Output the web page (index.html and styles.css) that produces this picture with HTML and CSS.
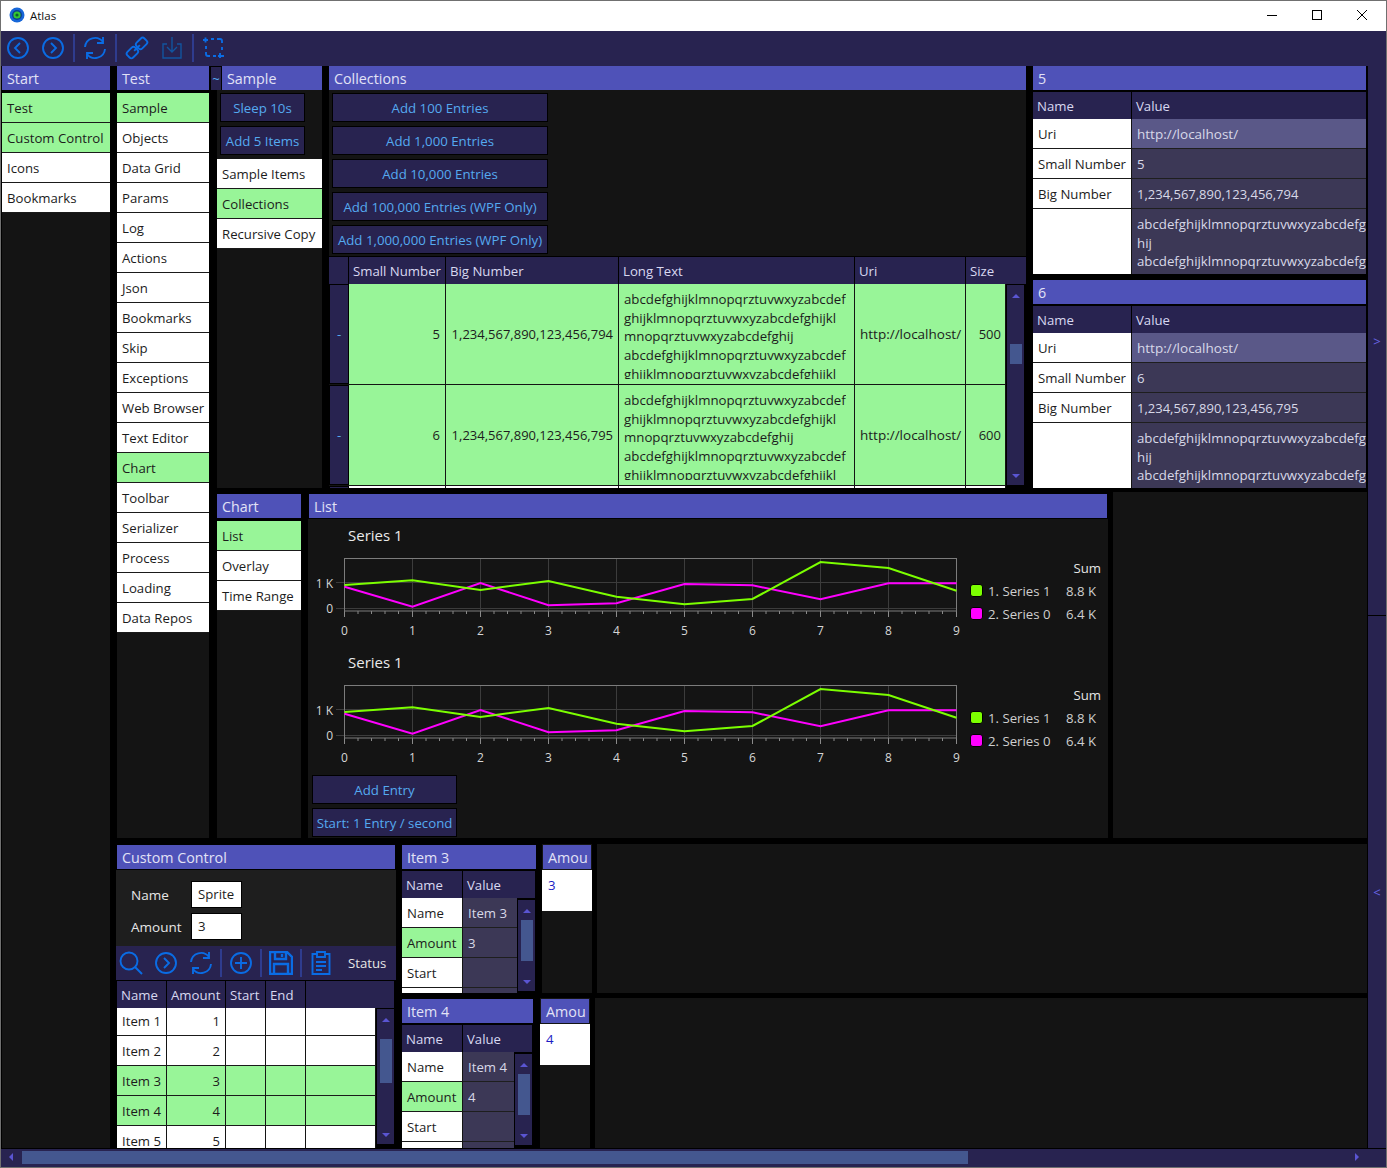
FILE: index.html
```html
<!DOCTYPE html>
<html>
<head>
  <title>Atlas</title>
  <meta charset="UTF-8">
  <link rel="stylesheet" href="styles.css">
</head>
<body>
<div class="window">
  <div class="titlebar">
    <svg class="app-icon" width="16" height="16" viewBox="0 0 16 16"><circle cx="8" cy="8" r="7.5" fill="#1767d8"/><circle cx="8" cy="8" r="5" fill="#0d3f8f"/><circle cx="8" cy="8" r="3.6" fill="#35c832"/><circle cx="8" cy="8" r="1.6" fill="#0d5f30"/></svg>
    <span class="app-name">Atlas</span>
    <div class="win-controls">
      <svg width="12" height="12" viewBox="0 0 12 12"><path d="M1 6.5h10" stroke="#000" fill="none"/></svg>
      <svg width="12" height="12" viewBox="0 0 12 12"><rect x="1.5" y="1.5" width="9" height="9" stroke="#000" fill="none"/></svg>
      <svg width="12" height="12" viewBox="0 0 12 12"><path d="M1 1l10 10M11 1L1 11" stroke="#000" fill="none"/></svg>
    </div>
  </div>

  <div class="toolbar">
    <svg class="ico" viewBox="0 0 24 24"><circle cx="12" cy="12" r="10"/><path d="M14 7l-5 5 5 5"/></svg>
    <svg class="ico" viewBox="0 0 24 24"><circle cx="12" cy="12" r="10"/><path d="M10 7l5 5-5 5"/></svg>
    <span class="sep"></span>
    <svg class="ico" viewBox="0 0 24 24"><path d="M2 11A10 10 0 0 1 20 6M22 13A10 10 0 0 1 4 18"/><path d="M20 1v6h-6M4 23v-6h6"/></svg>
    <span class="sep"></span>
    <svg class="ico" viewBox="0 0 24 24"><g transform="rotate(-45 12 12)"><rect x="0" y="8" width="11" height="8" rx="2.500"/><rect x="13" y="8" width="11" height="8" rx="2.500"/><path d="M8 12h8"/></g></svg>
    <svg class="ico dim" viewBox="0 0 24 24"><path d="M7 8H3v14h18V8h-4M12 1v14M7 11l5 5 5-5"/></svg>
    <span class="sep"></span>
    <svg class="ico" viewBox="0 0 24 24"><path d="M1 4h5M3.500 1.500v5M9 3h3M15 3h3a2 2 0 0 1 2 2v2M20 11v3M4 10v3M4 16v2a2 2 0 0 0 2 2h2M11 20h3M18 22v-5M16 20h6"/></svg>
  </div>

  <div class="main">
    <div class="col-start">
      <div class="head">Start</div>
      <div class="pane">
        <div class="item on">Test</div>
        <div class="item on">Custom Control</div>
        <div class="item">Icons</div>
        <div class="item">Bookmarks</div>
      </div>
    </div>

    <div class="content">
      <div class="upper">
        <div class="col-test">
          <div class="head">Test</div>
          <div class="pane">
            <div class="item on">Sample</div>
            <div class="item">Objects</div>
            <div class="item">Data Grid</div>
            <div class="item">Params</div>
            <div class="item">Log</div>
            <div class="item">Actions</div>
            <div class="item">Json</div>
            <div class="item">Bookmarks</div>
            <div class="item">Skip</div>
            <div class="item">Exceptions</div>
            <div class="item">Web Browser</div>
            <div class="item">Text Editor</div>
            <div class="item on">Chart</div>
            <div class="item">Toolbar</div>
            <div class="item">Serializer</div>
            <div class="item">Process</div>
            <div class="item">Loading</div>
            <div class="item">Data Repos</div>
          </div>
        </div>

        <div class="upper-right">
          <div class="top">
            <div class="col-sample">
              <div class="sample-head">
                <span class="tilde">~</span>
                <div class="head">Sample</div>
              </div>
              <div class="sample-body">
                <div class="sample-buttons">
                  <button class="btn btn-sm">Sleep 10s</button>
                  <button class="btn btn-sm">Add 5 Items</button>
                </div>
                <div class="item">Sample Items</div>
                <div class="item on">Collections</div>
                <div class="item">Recursive Copy</div>
              </div>
            </div>

            <div class="col-coll">
              <div class="head">Collections</div>
              <div class="coll-buttons">
                <button class="btn btn-lg">Add 100 Entries</button>
                <button class="btn btn-lg">Add 1,000 Entries</button>
                <button class="btn btn-lg">Add 10,000 Entries</button>
                <button class="btn btn-lg">Add 100,000 Entries (WPF Only)</button>
                <button class="btn btn-lg">Add 1,000,000 Entries (WPF Only)</button>
              </div>
              <div class="coll-head">
                <span></span><span>Small Number</span><span>Big Number</span><span>Long Text</span><span>Uri</span><span>Size</span>
              </div>
              <div class="coll-wrap">
                <div class="coll-rows">
                  <div class="coll-row">
                    <div class="rowhead">-</div>
                    <div class="cell num">5</div>
                    <div class="cell num">1,234,567,890,123,456,794</div>
                    <div class="cell long"><div class="clip">abcdefghijklmnopqrztuvwxyzabcdef<br>ghijklmnopqrztuvwxyzabcdefghijkl<br>mnopqrztuvwxyzabcdefghij<br>abcdefghijklmnopqrztuvwxyzabcdef<br>ghijklmnopqrztuvwxyzabcdefghijkl</div></div>
                    <div class="cell uri">http://localhost/</div>
                    <div class="cell num size">500</div>
                  </div>
                  <div class="coll-row">
                    <div class="rowhead">-</div>
                    <div class="cell num">6</div>
                    <div class="cell num">1,234,567,890,123,456,795</div>
                    <div class="cell long"><div class="clip">abcdefghijklmnopqrztuvwxyzabcdef<br>ghijklmnopqrztuvwxyzabcdefghijkl<br>mnopqrztuvwxyzabcdefghij<br>abcdefghijklmnopqrztuvwxyzabcdef<br>ghijklmnopqrztuvwxyzabcdefghijkl</div></div>
                    <div class="cell uri">http://localhost/</div>
                    <div class="cell num size">600</div>
                  </div>
                  <div class="coll-row coll-row-next"><div class="rowhead"></div><div class="cell"></div><div class="cell"></div><div class="cell"></div><div class="cell"></div><div class="cell"></div></div>
                </div>
                <div class="vscroll vs-coll">
                  <span class="arr-up"></span><span class="thumb"></span><span class="arr-down"></span>
                </div>
              </div>
            </div>

            <div class="col-detail">
              <div class="detail">
                <div class="head">5</div>
                <div class="detail-head"><span>Name</span><span>Value</span></div>
                <div class="detail-row"><div class="dn">Uri</div><div class="dv sel uri">http://localhost/</div></div>
                <div class="detail-row"><div class="dn">Small Number</div><div class="dv">5</div></div>
                <div class="detail-row"><div class="dn">Big Number</div><div class="dv big">1,234,567,890,123,456,794</div></div>
                <div class="detail-row tall"><div class="dn"></div><div class="dv">abcdefghijklmnopqrztuvwxyzabcdefg<br>hij<br>abcdefghijklmnopqrztuvwxyzabcdefg</div></div>
              </div>
              <div class="detail">
                <div class="head">6</div>
                <div class="detail-head"><span>Name</span><span>Value</span></div>
                <div class="detail-row"><div class="dn">Uri</div><div class="dv sel uri">http://localhost/</div></div>
                <div class="detail-row"><div class="dn">Small Number</div><div class="dv">6</div></div>
                <div class="detail-row"><div class="dn">Big Number</div><div class="dv big">1,234,567,890,123,456,795</div></div>
                <div class="detail-row tall"><div class="dn"></div><div class="dv">abcdefghijklmnopqrztuvwxyzabcdefg<br>hij<br>abcdefghijklmnopqrztuvwxyzabcdefg</div></div>
              </div>
            </div>
          </div>

          <div class="bottom">
            <div class="col-chart">
              <div class="head">Chart</div>
              <div class="pane">
                <div class="item on">List</div>
                <div class="item">Overlay</div>
                <div class="item">Time Range</div>
              </div>
            </div>
            <div class="col-list">
              <div class="head">List</div>
              <div class="list-body">
                <div class="chart">
                  <div class="chart-title">Series 1</div>
                  <div class="chart-row">
                    <svg class="plot" width="656" height="90" viewBox="312 550 656 90">
                      <g class="ticks"><path d="M344.500 611v6M412.500 611v6M480.500 611v6M548.500 611v6M616.500 611v6M684.500 611v6M752.500 611v6M820.500 611v6M888.500 611v6M956.500 611v6"/><path d="M358 611v3M371.500 611v3M385 611v3M398.500 611v3M426 611v3M439.500 611v3M453 611v3M466.500 611v3M494 611v3M507.500 611v3M521 611v3M534.500 611v3M562 611v3M575.500 611v3M589 611v3M602.500 611v3M630 611v3M643.500 611v3M657 611v3M670.500 611v3M698 611v3M711.500 611v3M725 611v3M738.500 611v3M766 611v3M779.500 611v3M793 611v3M806.500 611v3M834 611v3M847.500 611v3M861 611v3M874.500 611v3M902 611v3M915.500 611v3M929 611v3M942.500 611v3"/></g>
                      <path class="grid" d="M412.500 558v53M480.500 558v53M548.500 558v53M616.500 558v53M684.500 558v53M752.500 558v53M820.500 558v53M888.500 558v53M336 582.500h620M336 608.500h620"/>
                      <rect class="frame" x="344.500" y="558.500" width="612" height="52.500"/>
                      <polyline class="s-mag" points="344.500,586.700 412.500,606.700 480.500,583 548.500,605.300 616.500,603.300 684.500,584 752.500,585.300 820.500,599.300 888.500,583.300 956.500,583.300"/>
                      <polyline class="s-green" points="344.500,585 412.500,580.300 480.500,590 548.500,581 616.500,596.700 684.500,604.300 752.500,599 820.500,562 888.500,568 956.500,590.700"/>
                      <g class="axis"><text x="333" y="588" text-anchor="end">1 K</text><text x="333" y="613" text-anchor="end">0</text><text x="344.500" y="635" text-anchor="middle">0</text><text x="412.500" y="635" text-anchor="middle">1</text><text x="480.500" y="635" text-anchor="middle">2</text><text x="548.500" y="635" text-anchor="middle">3</text><text x="616.500" y="635" text-anchor="middle">4</text><text x="684.500" y="635" text-anchor="middle">5</text><text x="752.500" y="635" text-anchor="middle">6</text><text x="820.500" y="635" text-anchor="middle">7</text><text x="888.500" y="635" text-anchor="middle">8</text><text x="956.500" y="635" text-anchor="middle">9</text></g>
                    </svg>
                    <div class="legend">
                      <span class="sum">Sum</span>
                      <span class="swatch green"></span><span>1. Series 1</span><span class="lv">8.8 K</span>
                      <span class="swatch mag"></span><span>2. Series 0</span><span class="lv">6.4 K</span>
                    </div>
                  </div>
                </div>
                <div class="chart">
                  <div class="chart-title">Series 1</div>
                  <div class="chart-row">
                    <svg class="plot" width="656" height="90" viewBox="312 550 656 90">
                      <g class="ticks"><path d="M344.500 611v6M412.500 611v6M480.500 611v6M548.500 611v6M616.500 611v6M684.500 611v6M752.500 611v6M820.500 611v6M888.500 611v6M956.500 611v6"/><path d="M358 611v3M371.500 611v3M385 611v3M398.500 611v3M426 611v3M439.500 611v3M453 611v3M466.500 611v3M494 611v3M507.500 611v3M521 611v3M534.500 611v3M562 611v3M575.500 611v3M589 611v3M602.500 611v3M630 611v3M643.500 611v3M657 611v3M670.500 611v3M698 611v3M711.500 611v3M725 611v3M738.500 611v3M766 611v3M779.500 611v3M793 611v3M806.500 611v3M834 611v3M847.500 611v3M861 611v3M874.500 611v3M902 611v3M915.500 611v3M929 611v3M942.500 611v3"/></g>
                      <path class="grid" d="M412.500 558v53M480.500 558v53M548.500 558v53M616.500 558v53M684.500 558v53M752.500 558v53M820.500 558v53M888.500 558v53M336 582.500h620M336 608.500h620"/>
                      <rect class="frame" x="344.500" y="558.500" width="612" height="52.500"/>
                      <polyline class="s-mag" points="344.500,586.700 412.500,606.700 480.500,583 548.500,605.300 616.500,603.300 684.500,584 752.500,585.300 820.500,599.300 888.500,583.300 956.500,583.300"/>
                      <polyline class="s-green" points="344.500,585 412.500,580.300 480.500,590 548.500,581 616.500,596.700 684.500,604.300 752.500,599 820.500,562 888.500,568 956.500,590.700"/>
                      <g class="axis"><text x="333" y="588" text-anchor="end">1 K</text><text x="333" y="613" text-anchor="end">0</text><text x="344.500" y="635" text-anchor="middle">0</text><text x="412.500" y="635" text-anchor="middle">1</text><text x="480.500" y="635" text-anchor="middle">2</text><text x="548.500" y="635" text-anchor="middle">3</text><text x="616.500" y="635" text-anchor="middle">4</text><text x="684.500" y="635" text-anchor="middle">5</text><text x="752.500" y="635" text-anchor="middle">6</text><text x="820.500" y="635" text-anchor="middle">7</text><text x="888.500" y="635" text-anchor="middle">8</text><text x="956.500" y="635" text-anchor="middle">9</text></g>
                    </svg>
                    <div class="legend">
                      <span class="sum">Sum</span>
                      <span class="swatch green"></span><span>1. Series 1</span><span class="lv">8.8 K</span>
                      <span class="swatch mag"></span><span>2. Series 0</span><span class="lv">6.4 K</span>
                    </div>
                  </div>
                </div>
                <div class="list-buttons">
                  <button class="btn btn-wide">Add Entry</button>
                  <button class="btn btn-wide">Start: 1 Entry / second</button>
                </div>
              </div>
            </div>
            <div class="empty empty-list"></div>
          </div>
        </div>
      </div>

      <div class="lower">
        <div class="col-custom">
          <div class="head">Custom Control</div>
          <div class="form">
            <div class="form-row"><label>Name</label><div class="input">Sprite</div></div>
            <div class="form-row"><label>Amount</label><div class="input">3</div></div>
          </div>
          <div class="subtool">
            <svg class="ico" viewBox="0 0 24 24"><circle cx="10" cy="10" r="8.500"/><path d="M16 16l7 7"/></svg>
            <svg class="ico" viewBox="0 0 24 24"><circle cx="12" cy="12" r="10"/><path d="M10 7l5 5-5 5"/></svg>
            <svg class="ico" viewBox="0 0 24 24"><path d="M2 11A10 10 0 0 1 20 6M22 13A10 10 0 0 1 4 18"/><path d="M20 1v6h-6M4 23v-6h6"/></svg>
            <span class="sep"></span>
            <svg class="ico" viewBox="0 0 24 24"><circle cx="12" cy="12" r="10"/><path d="M12 6v12M6 12h12"/></svg>
            <span class="sep"></span>
            <svg class="ico strong" viewBox="0 0 24 24"><path d="M1 1h17l5 5v17H1zM6 1v7h11V1M13 3v3M5 23v-10h14v10"/></svg>
            <span class="sep"></span>
            <svg class="ico" viewBox="0 0 24 24"><path d="M8 3H3.500v20h17V3H16M8 1h8v5H8zM7 11h10M7 15h10M7 19h6"/></svg>
            <span class="status">Status</span>
          </div>
          <div class="items-head"><span>Name</span><span>Amount</span><span>Start</span><span>End</span><span></span></div>
          <div class="items-wrap">
            <div class="items-rows">
              <div class="items-row"><div class="cell">Item 1</div><div class="cell num">1</div><div class="cell"></div><div class="cell"></div><div class="cell"></div></div>
              <div class="items-row"><div class="cell">Item 2</div><div class="cell num">2</div><div class="cell"></div><div class="cell"></div><div class="cell"></div></div>
              <div class="items-row on"><div class="cell">Item 3</div><div class="cell num">3</div><div class="cell"></div><div class="cell"></div><div class="cell"></div></div>
              <div class="items-row on"><div class="cell">Item 4</div><div class="cell num">4</div><div class="cell"></div><div class="cell"></div><div class="cell"></div></div>
              <div class="items-row"><div class="cell">Item 5</div><div class="cell num">5</div><div class="cell"></div><div class="cell"></div><div class="cell"></div></div>
            </div>
            <div class="vscroll vs-items">
              <span class="arr-up"></span><span class="thumb"></span><span class="arr-down"></span>
            </div>
          </div>
        </div>

        <div class="col-instances">
          <div class="instance inst-3">
            <div class="inst-main">
              <div class="head">Item 3</div>
              <div class="inst-head"><span>Name</span><span>Value</span></div>
              <div class="inst-wrap">
                <div class="inst-rows">
                  <div class="inst-row"><div class="dn">Name</div><div class="dv">Item 3</div></div>
                  <div class="inst-row"><div class="dn on">Amount</div><div class="dv">3</div></div>
                  <div class="inst-row"><div class="dn">Start</div><div class="dv"></div></div>
                  <div class="inst-row"><div class="dn"></div><div class="dv"></div></div>
                </div>
                <div class="vscroll vs-inst"><span class="arr-up"></span><span class="thumb"></span><span class="arr-down"></span></div>
              </div>
            </div>
            <div class="amount">
              <div class="head">Amou</div>
              <div class="amount-val">3</div>
            </div>
            <div class="empty"></div>
          </div>
          <div class="instance inst-4">
            <div class="inst-main">
              <div class="head">Item 4</div>
              <div class="inst-head"><span>Name</span><span>Value</span></div>
              <div class="inst-wrap">
                <div class="inst-rows">
                  <div class="inst-row"><div class="dn">Name</div><div class="dv">Item 4</div></div>
                  <div class="inst-row"><div class="dn on">Amount</div><div class="dv">4</div></div>
                  <div class="inst-row"><div class="dn">Start</div><div class="dv"></div></div>
                  <div class="inst-row"><div class="dn"></div><div class="dv"></div></div>
                </div>
                <div class="vscroll vs-inst"><span class="arr-up"></span><span class="thumb"></span><span class="arr-down"></span></div>
              </div>
            </div>
            <div class="amount">
              <div class="head">Amou</div>
              <div class="amount-val">4</div>
            </div>
            <div class="empty"></div>
          </div>
        </div>
      </div>
    </div>

    <div class="side">
      <div class="side-part side-upper">&gt;</div>
      <div class="side-part side-lower">&lt;</div>
    </div>
  </div>

  <div class="hscroll">
    <span class="arr-left"></span>
    <span class="hthumb"></span>
    <span class="arr-right"></span>
  </div>
</div>
</body>
</html>
```

FILE: styles.css
```css
* {
  box-sizing: border-box;
}
body {
  margin: 0;
  font-family: "Open Sans", "Noto Sans", sans-serif;
  font-size: 13.2px;
  color: #1c1c1c;
  background: #000;
}
button {
  font-family: inherit;
}
.window {
  width: 1387px;
  height: 1168px;
  border: 1px solid #707070;
  display: flex;
  flex-direction: column;
  background: #000;
  overflow: hidden;
}

/* title bar */
.titlebar {
  height: 30px;
  flex: none;
  background: #fff;
  display: flex;
  align-items: center;
  padding: 0 18px 2px 8px;
}
.app-name {
  margin-left: 5px;
  font-size: 11.5px;
  color: #111;
}
.win-controls {
  margin-left: auto;
  display: flex;
  gap: 33px;
}

/* toolbars */
.toolbar,
.subtool {
  display: flex;
  align-items: center;
  background: #282350;
  flex: none;
}
.toolbar {
  height: 35px;
  padding-bottom: 1px;
}
.ico {
  width: 24px;
  height: 24px;
  margin: 0 5.5px;
  fill: none;
  stroke: #0a6ce4;
  stroke-width: 1.9;
  flex: none;
}
.toolbar .ico:first-child {
  margin-left: 4.5px;
}
.ico.dim {
  stroke: #12549f;
  stroke-width: 1.4;
}
.ico.strong {
  stroke-width: 2.4;
}
.sep {
  width: 2px;
  height: 28px;
  margin: 0 2.5px;
  background: #2f3c8e;
}

/* layout */
.main {
  height: 1082px;
  flex: none;
  display: flex;
}
.col-start {
  width: 108px;
  margin-left: 1px;
  display: flex;
  flex-direction: column;
}
.content {
  width: 1250px;
  margin-left: 7px;
  display: flex;
  flex-direction: column;
}
.upper {
  height: 772px;
  flex: none;
  display: flex;
}
.col-test {
  width: 92px;
  flex: none;
  display: flex;
  flex-direction: column;
}
.upper-right {
  margin-left: 2px;
  width: 1156px;
  display: flex;
  flex-direction: column;
}
.top {
  height: 422px;
  flex: none;
  display: flex;
}
.bottom {
  height: 346px;
  margin-top: 4px;
  flex: none;
  display: flex;
}
.lower {
  height: 304px;
  margin-top: 6px;
  flex: none;
  display: flex;
}

/* shared */
.head {
  height: 24px;
  flex: none;
  background: #4f52b8;
  color: #e2e2f6;
  font-size: 14.3px;
  line-height: 25px;
  padding-left: 5px;
  white-space: nowrap;
  overflow: hidden;
}
.pane {
  flex: 1;
  background: #141414;
  border-top: 3px solid #000;
}
.item {
  height: 30px;
  background: #fff;
  border-bottom: 1px solid #1a1a1a;
  padding-left: 5px;
  line-height: 31px;
  white-space: nowrap;
  overflow: hidden;
}
.item.on,
.items-row.on,
.dn.on {
  background: #98f598;
}
.btn {
  display: block;
  height: 29px;
  background: #282350;
  color: #55aaf0;
  border: 1px solid #000;
  font-size: 13.25px;
  padding: 0;
  white-space: nowrap;
}
.cell {
  border-right: 1px solid #141414;
  padding: 0 5px 0 5px;
  display: flex;
  align-items: center;
  white-space: nowrap;
  overflow: hidden;
  min-width: 0;
}
.cell.num {
  justify-content: flex-end;
  font-size: 13px;
}
.cell.size {
  padding-right: 4px;
}
.cell.uri,
.dv.uri {
  font-size: 13.5px;
}
.empty {
  flex: 1;
  background: #141414;
}

/* sample column */
.col-sample {
  width: 112px;
  flex: none;
  display: flex;
  flex-direction: column;
}
.sample-head {
  display: flex;
  height: 24px;
  flex: none;
}
.tilde {
  width: 10px;
  margin: 1px 1px 0 0;
  background: #282350;
  color: #55aaf0;
  font-size: 13px;
  text-align: center;
  line-height: 24px;
}
.sample-head .head {
  width: 100px;
}
.sample-body {
  flex: 1;
  margin-left: 5px;
  background: #141414;
  border: 1px solid #000;
  border-width: 0 1px 0 1px;
  width: 107px;
}
.sample-buttons {
  display: flex;
  flex-direction: column;
  gap: 4px;
  padding: 3px 17px 4px 3px;
}
.btn-sm {
  width: 85px;
}

/* collections */
.col-coll {
  width: 697px;
  margin-left: 6px;
  flex: none;
  display: flex;
  flex-direction: column;
}
.coll-buttons {
  height: 166px;
  flex: none;
  padding: 3px 0 0 3px;
  background: #141414;
  display: flex;
  flex-direction: column;
  gap: 4px;
  margin-bottom: 1px;
}
.btn-lg {
  width: 216px;
}
.coll-head,
.coll-row {
  display: grid;
  grid-template-columns: 20px 97px 173px 236px 111px 40px;
}
.coll-head {
  grid-template-columns: 20px 97px 173px 236px 111px 59px;
  height: 27px;
  flex: none;
  background: #282350;
  color: #d8d8f0;
}
.coll-head span,
.items-head span,
.inst-head span,
.detail-head span {
  border-right: 1px solid #000;
  padding-left: 4px;
  line-height: 28px;
  white-space: nowrap;
}
.coll-head span:last-child {
  border-right: none;
}
.coll-wrap {
  flex: 1;
  display: flex;
  overflow: hidden;
}
.coll-rows {
  width: 677px;
  flex: none;
}
.coll-row {
  height: 101px;
  background: #98f598;
  border-bottom: 1px solid #141414;
}
.coll-row-next {
  background: #fff;
}
.rowhead {
  background: #282350;
  border: 1px solid #000;
  color: #55aaf0;
  text-align: center;
  line-height: 98px;
}
.cell.long {
  align-items: flex-start;
  padding-top: 6px;
}
.clip {
  height: 89px;
  overflow: hidden;
  line-height: 18.7px;
  font-size: 13.25px;
}

/* scrollbars */
.vscroll {
  width: 19px;
  flex: none;
  background: #282350;
  border: 1px solid #000;
  display: flex;
  flex-direction: column;
  align-items: center;
  padding: 9px 0 7px;
}
.arr-up {
  width: 0;
  height: 0;
  border: 4px solid transparent;
  border-top: none;
  border-bottom: 4px solid #5a55d2;
}
.arr-down {
  width: 0;
  height: 0;
  border: 4px solid transparent;
  border-bottom: none;
  border-top: 4px solid #5a55d2;
  margin-top: auto;
}
.thumb {
  width: 12px;
  background: #44578f;
}
.vs-coll {
  height: 202px;
}
.vs-coll .thumb {
  height: 20px;
  margin-top: 46px;
}
.vs-items {
  height: 137px;
}
.vs-items .thumb {
  height: 44px;
  margin-top: 17px;
}
.vs-inst {
  height: 93px;
  margin-top: 1px;
}
.vs-inst .thumb {
  height: 41px;
  margin-top: 7px;
}

/* detail tables */
.col-detail {
  width: 333px;
  margin-left: 7px;
  flex: none;
  display: flex;
  flex-direction: column;
  gap: 6px;
}
.detail {
  height: 208px;
  display: flex;
  flex-direction: column;
  overflow: hidden;
}
.detail-head {
  display: grid;
  grid-template-columns: 99px 1fr;
  height: 27px;
  margin-top: 2px;
  flex: none;
  background: #282350;
  color: #d8d8f0;
}
.detail-head span:last-child {
  border-right: none;
}
.detail-row {
  display: grid;
  grid-template-columns: 99px 1fr;
  height: 30px;
  flex: none;
}
.detail-row.tall {
  height: 66px;
}
.dn {
  background: #fff;
  border-right: 1px solid #141414;
  border-bottom: 1px solid #1a1a1a;
  padding-left: 5px;
  line-height: 31px;
  white-space: nowrap;
  overflow: hidden;
}
.dv {
  background: #3c3856;
  color: #d8d8e8;
  border-bottom: 1px solid #1e1e1e;
  padding-left: 5px;
  line-height: 31px;
  white-space: nowrap;
  overflow: hidden;
}
.dv.big {
  font-size: 13px;
}
.dv.sel {
  background: #5a5888;
}
.tall .dv {
  line-height: 18.5px;
  padding-top: 6px;
  font-size: 13.25px;
  border-bottom: none;
}

/* chart panel */
.col-chart {
  width: 84px;
  margin-left: 6px;
  flex: none;
  display: flex;
  flex-direction: column;
  margin-top: 2px;
}
.col-list {
  width: 800px;
  margin-left: 7px;
  flex: none;
  display: flex;
  flex-direction: column;
  margin-top: 2px;
}
.col-list .head {
  margin-left: 1px;
  width: 798px;
}
.list-body {
  flex: 1;
  background: #141414;
  border-top: 1px solid #000;
}
.chart {
  height: 127px;
}
.chart-title {
  height: 31px;
  padding-left: 40px;
  color: #eaeaea;
  font-size: 15px;
  line-height: 33px;
}
.chart-row {
  display: flex;
  padding-left: 4px;
}
.plot {
  flex: none;
  display: block;
}
.ticks path {
  stroke: #8a8a8a;
  fill: none;
}
.grid {
  stroke: #3c3c3c;
  fill: none;
}
.frame {
  stroke: #7c7c7c;
  fill: none;
}
.s-green {
  stroke: #7cff00;
  stroke-width: 2;
  fill: none;
}
.s-mag {
  stroke: #ff00ff;
  stroke-width: 2;
  fill: none;
}
.axis text {
  fill: #d6d6d6;
  font-size: 12px;
}
.legend {
  display: grid;
  grid-template-columns: 17px 78px 35px;
  grid-auto-rows: 23px;
  align-items: center;
  padding: 6px 0 0 3px;
  height: 76px;
  color: #cfcfcf;
}
.legend span {
  white-space: nowrap;
}
.legend .sum {
  grid-column: 1 / -1;
  text-align: right;
  color: #e4e4e4;
}
.swatch {
  width: 13px;
  height: 13px;
  border-radius: 3px;
  border: 1px solid #000;
  margin-left: -1px;
}
.swatch.green {
  background: #7cff00;
}
.swatch.mag {
  background: #ff00ff;
}
.list-buttons {
  display: flex;
  flex-direction: column;
  gap: 4px;
  padding: 2px 0 0 4px;
}
.btn-wide {
  width: 145px;
}
.empty-list {
  margin: 0 0 0 5px;
}

/* custom control */
.col-custom {
  width: 280px;
  flex: none;
  margin-left: -1px;
  display: flex;
  flex-direction: column;
}
.col-custom > .head {
  margin: 1px 1px 0 1px;
}
.form {
  height: 77px;
  flex: none;
  background: #1e1e1e;
  border-top: 1px solid #000;
  padding: 11px 0 0 15px;
  display: flex;
  flex-direction: column;
  gap: 5px;
}
.form-row {
  display: flex;
  align-items: center;
  height: 27px;
}
.form-row label {
  width: 60px;
  color: #e6e6e6;
  font-size: 13.5px;
}
.input {
  width: 51px;
  height: 27px;
  background: #fff;
  border: 1px solid #000;
  padding-left: 6px;
  line-height: 25px;
}
.subtool {
  height: 34px;
  color: #e6e6e6;
}
.subtool .sep {
  margin: 0 1.5px;
}
.subtool .ico:first-child {
  margin-left: 3px;
}
.status {
  margin-left: 9.5px;
}
.items-head,
.items-row {
  display: grid;
  grid-template-columns: 50px 59px 40px 40px 1fr;
}
.items-head {
  height: 27px;
  margin: 1px 2px 0 1px;
  flex: none;
  background: #282350;
  color: #d8d8f0;
}
.items-head span:last-child {
  border-right: none;
}
.items-wrap {
  flex: 1;
  display: flex;
  overflow: hidden;
  margin-left: 1px;
}
.items-rows {
  width: 259px;
  flex: none;
}
.items-row {
  height: 30px;
  background: #fff;
  border-bottom: 1px solid #1a1a1a;
}
.items-row:first-child {
  height: 28px;
}
.items-row:first-child .cell {
  padding-bottom: 2px;
}

/* instances */
.col-instances {
  flex: 1;
  margin-left: 6px;
  display: flex;
  flex-direction: column;
  gap: 5px;
  min-width: 0;
}
.instance {
  height: 149px;
  display: flex;
  flex: none;
}
.inst-4.instance {
  height: 150px;
}
.inst-main {
  display: flex;
  flex-direction: column;
  overflow: hidden;
  padding-top: 1px;
}
.inst-3 .inst-main {
  width: 134px;
}
.inst-4 .inst-main {
  width: 131px;
}
.inst-head {
  display: grid;
  grid-template-columns: 61px 1fr;
  height: 27px;
  margin: 2px 1px 0 0;
  flex: none;
  background: #282350;
  color: #d8d8f0;
}
.inst-head span:last-child {
  border-right: none;
}
.inst-wrap {
  flex: 1;
  display: flex;
  overflow: hidden;
}
.inst-rows {
  flex: 1;
  min-width: 0;
}
.inst-row {
  display: grid;
  grid-template-columns: 61px 1fr;
  height: 30px;
}
.amount {
  width: 50px;
  margin-left: 6px;
  display: flex;
  flex-direction: column;
  background: #141414;
  flex: none;
  padding-top: 1px;
}
.inst-4 .amount {
  margin-left: 7px;
}
.amount .head {
  margin-left: 1px;
  width: 48px;
}
.amount-val {
  height: 41px;
  background: #fff;
  color: #1c1cc4;
  padding: 6px 0 0 6px;
  margin-top: 1px;
}
.instance .empty {
  margin-left: 5px;
}

/* right strip and bottom scrollbar */
.side {
  width: 19px;
  flex: none;
  display: flex;
  flex-direction: column;
  gap: 1px;
  border-left: 1px solid #000;
}
.side-part {
  flex: none;
  background: #282350;
  color: #6a66e6;
  font-size: 13px;
  text-align: center;
}
.side-upper {
  height: 549px;
  line-height: 550px;
}
.side-lower {
  flex: 1;
  line-height: 552px;
}
.hscroll {
  flex: 1;
  background: #282350;
  display: flex;
  align-items: center;
  padding: 0 27px 2px 8px;
  border-top: 1px solid #000;
}
.hthumb {
  width: 946px;
  height: 13px;
  margin-left: 9px;
  background: #44578f;
}
.arr-left {
  width: 0;
  height: 0;
  border: 4px solid transparent;
  border-left: none;
  border-right: 4px solid #5a55d2;
}
.arr-right {
  width: 0;
  height: 0;
  border: 4px solid transparent;
  border-right: none;
  border-left: 4px solid #5a55d2;
  margin-left: auto;
}
```
